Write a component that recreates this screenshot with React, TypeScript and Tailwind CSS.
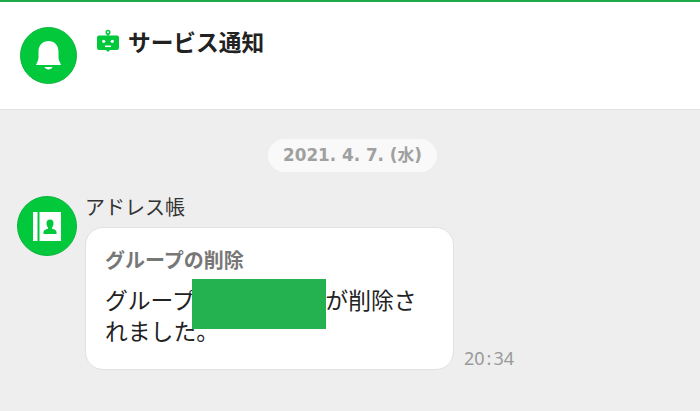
export default function App() {
  return (
    <div className="h-[411px] w-[700px] overflow-hidden bg-[#eeeeee] font-['Noto_Sans','Noto_Sans_CJK_JP',sans-serif]">
      <header className="flex h-[110px] items-start border-t-2 border-b border-t-[#1fa94a] border-b-[#e1e1e1] bg-white pl-5 pt-[25px]">
        <div className="flex size-[57px] items-center justify-center rounded-full border border-[#0bb53c] bg-[#02c83c]">
          <svg width="25" height="29" viewBox="0 0 25 29"><path fill="white" d="M2.500 10.500C2.500 4 7 0 12.500 0S22.500 4 22.500 10.500v6c0 3 1.500 4.500 2.500 7.500H0c1-3 2.500-4.500 2.500-7.500zM8.500 26h8c-1 3.200-7 3.200-8 0z" /></svg>
        </div>
        <div className="ml-5 mt-[2px] flex items-start">
          <svg width="22" height="24" viewBox="0 0 22 24"><circle cx="11" cy="3.300" r="1.800" fill="none" stroke="#02c83c" strokeWidth="1.500" /><path fill="#02c83c" d="M10.300 5h1.400v1.500H20a2 2 0 0 1 2 2V19a2 2 0 0 1-2 2h-7l-2 2-2-2H2a2 2 0 0 1-2-2V8.500a2 2 0 0 1 2-2h8.300z" /><circle cx="6.700" cy="12.300" r="1.600" fill="white" /><circle cx="15.300" cy="12.300" r="1.600" fill="white" /><path stroke="white" strokeWidth="1.600" d="M8 17.300h6" /></svg>
          <h1 className="ml-[9px] mt-[2px] text-[22.700px] leading-[24px] font-bold text-[#222222]">サービス通知</h1>
        </div>
      </header>
      <main className="px-[17px] pt-[29px]">
        <div className="ml-[251px] h-[33px] w-[169px] rounded-full bg-[#f9f9f9] text-center font-['DejaVu_Sans','Noto_Sans_CJK_JP',sans-serif] text-[16.800px] leading-[32px] font-bold whitespace-nowrap text-[#a0a0a0]">2021. 4. 7. (水)</div>
        <div className="mt-6 flex">
          <div className="flex size-[60px] items-center justify-center rounded-full border border-[#0bb53c] bg-[#02c83c]">
            <svg width="28" height="29" viewBox="0 0 28 29"><path fill="white" d="M0 0h4.500v29H0zM6.500 0H28v29H6.500z" /><path fill="#02c83c" d="M17 7.500c2.500 0 3.500 1.600 3.500 4 0 2-.7 3-1.500 4v1.300c2.500.7 4.500 1.300 4.500 3.200v2h-13v-2c0-1.900 2-2.500 4.500-3.200v-1.300c-.8-1-1.500-2-1.500-4 0-2.400 1-4 3.500-4z" /></svg>
          </div>
          <div className="ml-2">
            <div className="text-[20px] leading-[24px] text-[#333333]">アドレス帳</div>
            <div className="mt-[7px] flex items-end">
              <section className="relative h-[143px] w-[369px] rounded-[18px] border border-[#e1e1e1] bg-white px-[19px] pt-[18px]">
                <h2 className="text-[20px] leading-[30px] font-bold text-[#777777]">グループの削除</h2>
                <p className="mt-[9px] text-[22.800px] leading-[31px] whitespace-nowrap text-[#222222]">グループ<span className="inline-block w-[130.500px]" />が削除さ<br />れました。</p>
                <div className="absolute left-[106px] top-[51px] h-[50px] w-[134px] bg-[#24b14f]" />
              </section>
              <time className="ml-2.5 text-[18px] leading-[24px] text-[#999999]">20<span className="px-[2px]">:</span>34</time>
            </div>
          </div>
        </div>
      </main>
    </div>
  );
}
